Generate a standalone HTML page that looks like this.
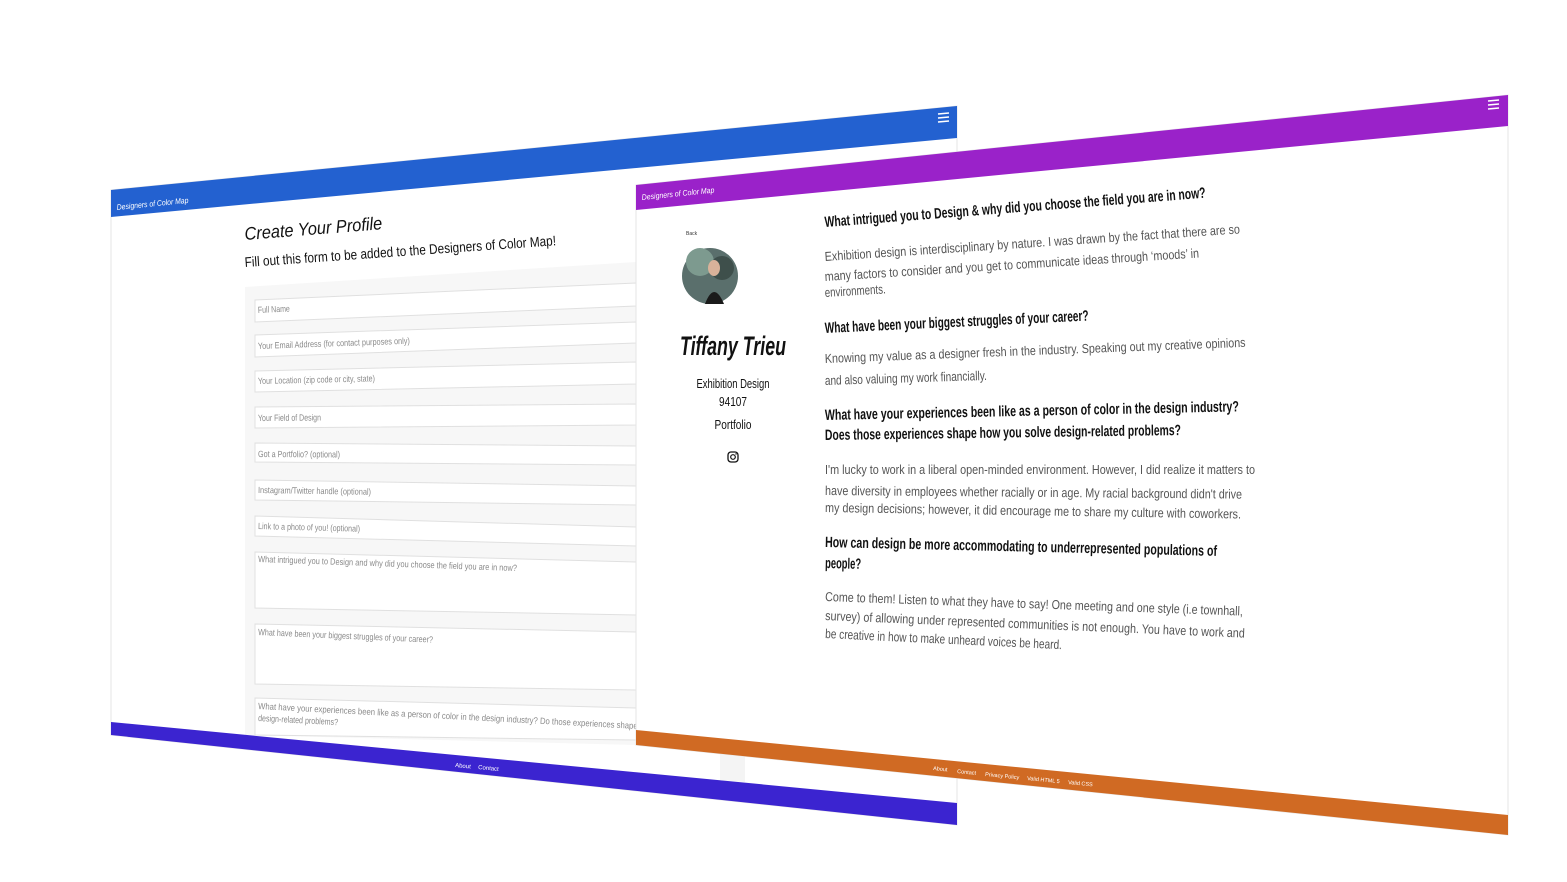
<!DOCTYPE html>
<html><head><meta charset="utf-8"><style>
html,body{margin:0;padding:0;background:#fff;width:1567px;height:882px;overflow:hidden}
svg{display:block}
text{font-family:"Liberation Sans",sans-serif}
.f{fill:#8a8a8a;font-size:9px}
.q{fill:#111;font-size:15px;font-weight:bold}
.a{fill:#555;font-size:13px}
</style></head><body>
<svg width="1567" height="882" viewBox="0 0 1567 882">
<polygon points="111,190 957,106 957,825 111,735" fill="#fff" stroke="#e6e6e6"/>
<polygon points="111,190 957,106 957,138 111,217" fill="#2361d0"/>
<text x="117" y="210" transform="rotate(-5.7 117 210)" fill="#fff" font-size="8" font-style="italic" font-family="Liberation Serif,serif" textLength="72" lengthAdjust="spacingAndGlyphs">Designers of Color Map</text>
<g stroke="#fff" stroke-width="1.6"><line x1="938" y1="114" x2="949" y2="113"/><line x1="938" y1="118" x2="949" y2="117"/><line x1="938" y1="122" x2="949" y2="121"/></g>
<text x="245" y="240" transform="rotate(-4.5 245 240)" fill="#111" font-size="18" font-style="italic" font-family="Liberation Serif,serif" textLength="138" lengthAdjust="spacingAndGlyphs">Create Your Profile</text>
<text x="245" y="267" transform="rotate(-4 245 267)" fill="#111" font-size="14" textLength="312" lengthAdjust="spacingAndGlyphs">Fill out this form to be added to the Designers of Color Map!</text>
<polygon points="245,287 636,262 636,745 245,735" fill="#f7f7f7"/>
<g fill="#fff" stroke="#e0e0e0">
<polygon points="255,300 636,283 636,306 255,322"/>
<polygon points="255,335 636,322 636,343 255,357"/>
<polygon points="255,371 636,362 636,384 255,392"/>
<polygon points="255,407 636,404 636,425 255,428"/>
<polygon points="255,443 636,446 636,465 255,462"/>
<polygon points="255,480 636,486 636,505 255,500"/>
<polygon points="255,516 636,527 636,546 255,536"/>
<polygon points="255,552 636,562 636,615 255,608"/>
<polygon points="255,624 636,632 636,690 255,684"/>
<polygon points="255,698 636,708 636,740 255,735"/>
</g>
<g class="f">
<text x="258" y="313" transform="rotate(-2.6 258 313)" textLength="32" lengthAdjust="spacingAndGlyphs">Full Name</text>
<text x="258" y="349" transform="rotate(-2 258 349)" textLength="152" lengthAdjust="spacingAndGlyphs">Your Email Address (for contact purposes only)</text>
<text x="258" y="384" transform="rotate(-1.3 258 384)" textLength="117" lengthAdjust="spacingAndGlyphs">Your Location (zip code or city, state)</text>
<text x="258" y="421" transform="rotate(-0.5 258 421)" textLength="63" lengthAdjust="spacingAndGlyphs">Your Field of Design</text>
<text x="258" y="457" transform="rotate(0.3 258 457)" textLength="82" lengthAdjust="spacingAndGlyphs">Got a Portfolio? (optional)</text>
<text x="258" y="493" transform="rotate(0.9 258 493)" textLength="113" lengthAdjust="spacingAndGlyphs">Instagram/Twitter handle (optional)</text>
<text x="258" y="529" transform="rotate(1.5 258 529)" textLength="102" lengthAdjust="spacingAndGlyphs">Link to a photo of you! (optional)</text>
<text x="258" y="562" transform="rotate(2 258 562)" textLength="259" lengthAdjust="spacingAndGlyphs">What intrigued you to Design and why did you choose the field you are in now?</text>
<text x="258" y="635" transform="rotate(2.5 258 635)" textLength="175" lengthAdjust="spacingAndGlyphs">What have been your biggest struggles of your career?</text>
<text x="258" y="709" transform="rotate(3 258 709)" textLength="380" lengthAdjust="spacingAndGlyphs">What have your experiences been like as a person of color in the design industry? Do those experiences shape</text>
<text x="258" y="721" transform="rotate(3 258 721)" textLength="80" lengthAdjust="spacingAndGlyphs">design-related problems?</text>
</g>
<polygon points="111,722 957,803 957,825 111,735" fill="#3b24d0"/>
<polygon points="720,745 745,747 745,782 720,780" fill="#f4f4f4"/>
<text x="455" y="767" transform="rotate(5.5 455 767)" fill="#fff" font-size="6">About</text>
<text x="478" y="769" transform="rotate(5.5 478 769)" fill="#fff" font-size="6">Contact</text>

<polygon points="636,185 1508,95 1508,835 636,745" fill="#fff" stroke="#e6e6e6"/>
<polygon points="636,185 1508,95 1508,126 636,210" fill="#9a22c9"/>
<text x="642" y="200" transform="rotate(-5.8 642 200)" fill="#fff" font-size="8" font-style="italic" font-family="Liberation Serif,serif" textLength="73" lengthAdjust="spacingAndGlyphs">Designers of Color Map</text>
<g stroke="#fff" stroke-width="1.6"><line x1="1488" y1="101" x2="1499" y2="100"/><line x1="1488" y1="105" x2="1499" y2="104"/><line x1="1488" y1="109" x2="1499" y2="108"/></g>
<text x="686" y="235" fill="#333" font-size="5">Back</text>
<circle cx="710" cy="276" r="28" fill="#5a6f6c"/>
<circle cx="700" cy="262" r="14" fill="#7d9a8f"/>
<circle cx="722" cy="268" r="12" fill="#3e4f4b"/>
<ellipse cx="714" cy="268" rx="6" ry="8" fill="#d8b29a"/>
<path d="M705,304 Q714,280 724,304 Z" fill="#1a1a1a"/>
<text x="733" y="355" text-anchor="middle" fill="#111" font-size="27" font-weight="bold" font-style="italic" font-family="Liberation Serif,serif" textLength="106" lengthAdjust="spacingAndGlyphs">Tiffany Trieu</text>
<text x="733" y="388" text-anchor="middle" fill="#111" font-size="13" textLength="73" lengthAdjust="spacingAndGlyphs">Exhibition Design</text>
<text x="733" y="406" text-anchor="middle" fill="#111" font-size="13" textLength="28" lengthAdjust="spacingAndGlyphs">94107</text>
<text x="733" y="429" text-anchor="middle" fill="#111" font-size="13" textLength="37" lengthAdjust="spacingAndGlyphs">Portfolio</text>
<rect x="728" y="452" width="10" height="10" rx="3" fill="none" stroke="#111" stroke-width="1.3"/>
<circle cx="733" cy="457" r="2.3" fill="none" stroke="#111" stroke-width="1.2"/>
<circle cx="736" cy="454" r="0.7" fill="#111"/>

<text class="q" x="825" y="227" transform="rotate(-4.4 825 227)" textLength="382" lengthAdjust="spacingAndGlyphs">What intrigued you to Design &amp; why did you choose the field you are in now?</text>
<text class="a" x="825" y="261" transform="rotate(-3.8 825 261)" textLength="416" lengthAdjust="spacingAndGlyphs">Exhibition design is interdisciplinary by nature. I was drawn by the fact that there are so</text>
<text class="a" x="825" y="281" transform="rotate(-3.6 825 281)" textLength="375" lengthAdjust="spacingAndGlyphs">many factors to consider and you get to communicate ideas through ‘moods’ in</text>
<text class="a" x="825" y="297" transform="rotate(-3.4 825 297)" textLength="61" lengthAdjust="spacingAndGlyphs">environments.</text>
<text class="q" x="825" y="333" transform="rotate(-2.7 825 333)" textLength="264" lengthAdjust="spacingAndGlyphs">What have been your biggest struggles of your career?</text>
<text class="a" x="825" y="363" transform="rotate(-2.2 825 363)" textLength="421" lengthAdjust="spacingAndGlyphs">Knowing my value as a designer fresh in the industry. Speaking out my creative opinions</text>
<text class="a" x="825" y="385" transform="rotate(-1.8 825 385)" textLength="162" lengthAdjust="spacingAndGlyphs">and also valuing my work financially.</text>
<text class="q" x="825" y="420" transform="rotate(-1.2 825 420)" textLength="414" lengthAdjust="spacingAndGlyphs">What have your experiences been like as a person of color in the design industry?</text>
<text class="q" x="825" y="440" transform="rotate(-0.8 825 440)" textLength="356" lengthAdjust="spacingAndGlyphs">Does those experiences shape how you solve design-related problems?</text>
<text class="a" x="825" y="474" transform="rotate(0 825 474)" textLength="430" lengthAdjust="spacingAndGlyphs">I'm lucky to work in a liberal open-minded environment. However, I did realize it matters to</text>
<text class="a" x="825" y="495" transform="rotate(0.5 825 495)" textLength="417" lengthAdjust="spacingAndGlyphs">have diversity in employees whether racially or in age. My racial background didn't drive</text>
<text class="a" x="825" y="512" transform="rotate(0.9 825 512)" textLength="416" lengthAdjust="spacingAndGlyphs">my design decisions; however, it did encourage me to share my culture with coworkers.</text>
<text class="q" x="825" y="547" transform="rotate(1.3 825 547)" textLength="392" lengthAdjust="spacingAndGlyphs">How can design be more accommodating to underrepresented populations of</text>
<text class="q" x="825" y="568" transform="rotate(1.5 825 568)" textLength="36" lengthAdjust="spacingAndGlyphs">people?</text>
<text class="a" x="825" y="601" transform="rotate(2 825 601)" textLength="418" lengthAdjust="spacingAndGlyphs">Come to them! Listen to what they have to say! One meeting and one style (i.e townhall,</text>
<text class="a" x="825" y="620" transform="rotate(2.4 825 620)" textLength="420" lengthAdjust="spacingAndGlyphs">survey) of allowing under represented communities is not enough. You have to work and</text>
<text class="a" x="825" y="638" transform="rotate(2.7 825 638)" textLength="237" lengthAdjust="spacingAndGlyphs">be creative in how to make unheard voices be heard.</text>

<polygon points="636,730 1508,815 1508,835 636,745" fill="#d06a23"/>
<g fill="#fff" font-size="5.5">
<text x="933" y="770" transform="rotate(5.5 933 770)">About</text>
<text x="957" y="773" transform="rotate(5.5 957 773)">Contact</text>
<text x="985" y="776" transform="rotate(5.5 985 776)">Privacy Policy</text>
<text x="1027" y="780" transform="rotate(5.5 1027 780)">Valid HTML 5</text>
<text x="1068" y="784" transform="rotate(5.5 1068 784)">Valid CSS</text>
</g>
</svg>
</body></html>
